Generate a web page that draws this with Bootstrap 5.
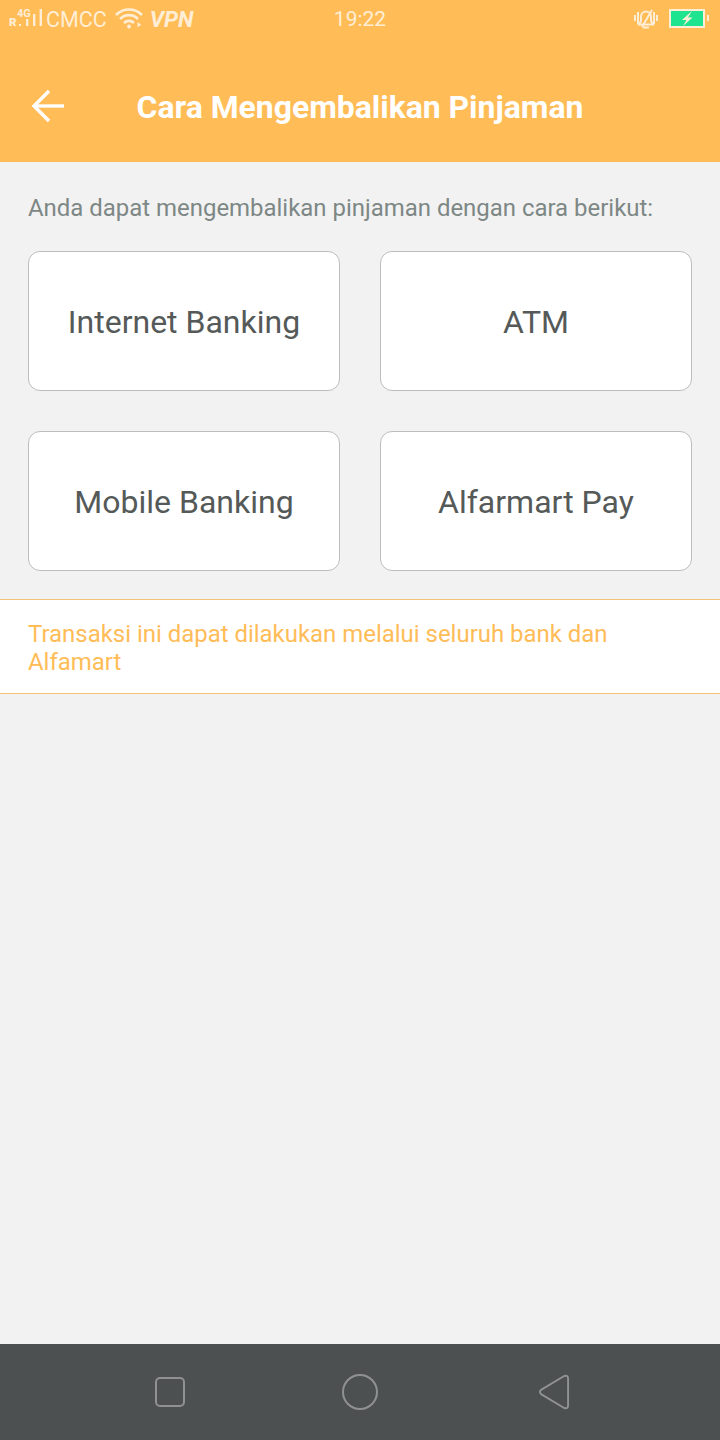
<!DOCTYPE html>
<html lang="en">
<head>
  <meta charset="UTF-8">
  <meta name="viewport" content="width=device-width, initial-scale=1.0">
  <title>Cara Mengembalikan Pinjaman</title>
  <link href="https://cdn.jsdelivr.net/npm/bootstrap@5.3.0/dist/css/bootstrap.min.css" rel="stylesheet">
  <style>
    html, body {
      height: 1440px;
      overflow: hidden;
    }

    body {
      font-family: Roboto, "Liberation Sans", sans-serif;
      background-color: #f2f2f2;
    }

    .app-top {
      height: 162px;
      background-color: #ffbc57;
    }

    .status-row {
      height: 40px;
      padding: 0 11px 0 9px;
      color: #ffeed6;
      font-size: 21.5px;
    }

    .status-left {
      width: 242px;
    }

    .status-time {
      font-size: 21px;
    }

    .status-right {
      width: 240px;
    }

    .vpn-label {
      margin-left: 7px;
      font-weight: 700;
      font-style: italic;
      font-size: 22.5px;
    }

    .batt-icon {
      margin-left: 11px;
    }

    .title-row {
      height: 122px;
      padding-top: 14px;
    }

    .back-btn {
      left: 31px;
      top: 89px;
      line-height: 0;
    }

    .page-title {
      font-size: 31.9px;
      font-weight: 700;
      color: #fff;
    }

    .intro-text {
      padding: 32px 28px 0;
      height: 89px;
      font-size: 23.95px;
      line-height: 28px;
      color: #7d8785;
    }

    .method-grid {
      display: grid;
      grid-template-columns: 312px 312px;
      column-gap: 40px;
      row-gap: 40px;
      padding: 0 28px;
    }

    .method-btn {
      height: 140px;
      padding-top: 2px;
      font-size: 32px;
      color: #555a59;
      background-color: #fff;
      border: 1px solid #bdbdbd;
      border-radius: 12px;
    }

    .note-box {
      margin-top: 28px;
      padding: 20px 28px 17px;
      font-size: 23.95px;
      line-height: 28px;
      color: #ffbc57;
      background-color: #fff;
      border-top: 1px solid #f5c27a;
      border-bottom: 1px solid #f5c27a;
    }

    .nav-bottom {
      height: 96px;
      background-color: #4c5050;
    }

    .nav-slot {
      width: 190px;
      line-height: 0;
    }
  </style>
</head>
<body class="d-flex flex-column">

<div class="app-top position-relative">
  <div class="status-row d-flex align-items-center justify-content-between">
    <div class="status-left d-flex align-items-center">
      <svg width="33" height="40" viewBox="0 0 33 40" fill="#ffeed6">
        <text x="8" y="16.5" font-size="11" font-family="Roboto" font-weight="700">4G</text>
        <text x="0" y="26" font-size="11.5" font-family="Roboto" font-weight="900">R</text>
        <rect x="10" y="24" width="2" height="2"/>
        <rect x="17" y="19" width="2.4" height="7"/>
        <rect x="24" y="14" width="2.4" height="12"/>
        <rect x="30.6" y="9" width="2.4" height="17"/>
      </svg>
      <span class="ms-1">CMCC</span>
      <svg class="ms-2" width="28" height="40" viewBox="0 0 28 40" fill="none" stroke="#ffeed6" stroke-width="2.6">
        <path d="M1 15 A18 18 0 0 1 27 15"/>
        <path d="M5 19 A12.5 12.5 0 0 1 23 19"/>
        <path d="M9 23 A7 7 0 0 1 19 23"/>
        <circle cx="14" cy="26.5" r="2" fill="#ffeed6" stroke="none"/>
        <path d="M22 21 L27 25 L22 28 Z" fill="#ffeed6" stroke="#ffbc57" stroke-width="1"/>
      </svg>
      <span class="vpn-label">VPN</span>
    </div>
    <div class="status-time">19:22</div>
    <div class="status-right d-flex align-items-center justify-content-end">
      <svg width="24" height="40" viewBox="0 -9 24 40" fill="none" stroke="#ffeed6" stroke-width="2">
        <path d="M5 15.5 L7 12 V7.5 A5 5 0 0 1 17 7.5 V12 L19 15.5 Z"/>
        <path d="M9 18.5 H15"/>
        <path d="M18 1 L8 18"/>
        <path d="M1 6 V12 M4 3 V15 M20 3 V15 M23 6 V12"/>
      </svg>
      <svg class="batt-icon" width="40" height="40" viewBox="0 0 40 40">
        <rect x="1" y="10" width="34" height="17" fill="#1ee48f" stroke="#ffeed6" stroke-width="2"/>
        <rect x="38" y="15" width="2" height="6" fill="#ffeed6"/>
        <path d="M23 11 L13 20 H17.5 L14 26 L23.5 17.5 H19 Z" fill="#ffeed6"/>
      </svg>
    </div>
  </div>
  <div class="title-row d-flex align-items-center justify-content-center">
    <span class="back-btn position-absolute">
      <svg width="34" height="34" viewBox="0 0 34 34" fill="none" stroke="#fff" stroke-width="3.4">
        <path d="M33 17 H3"/>
        <path d="M18 2 L3 17 L18 32"/>
      </svg>
    </span>
    <div class="page-title">Cara Mengembalikan Pinjaman</div>
  </div>
</div>

<div class="intro-text">Anda dapat mengembalikan pinjaman dengan cara berikut:</div>

<div class="method-grid">
  <div class="method-btn d-flex align-items-center justify-content-center">Internet Banking</div>
  <div class="method-btn d-flex align-items-center justify-content-center">ATM</div>
  <div class="method-btn d-flex align-items-center justify-content-center">Mobile Banking</div>
  <div class="method-btn d-flex align-items-center justify-content-center">Alfarmart Pay</div>
</div>

<div class="note-box">Transaksi ini dapat dilakukan melalui seluruh bank dan Alfamart</div>

<div class="flex-grow-1"></div>

<div class="nav-bottom d-flex align-items-center justify-content-center">
  <div class="nav-slot d-flex justify-content-center">
    <svg width="30" height="30" viewBox="0 0 30 30" fill="none" stroke="#8f9291" stroke-width="2">
      <rect x="1" y="1" width="28" height="28" rx="4"/>
    </svg>
  </div>
  <div class="nav-slot d-flex justify-content-center">
    <svg width="36" height="36" viewBox="0 0 36 36" fill="none" stroke="#8f9291" stroke-width="2">
      <circle cx="18" cy="18" r="17"/>
    </svg>
  </div>
  <div class="nav-slot d-flex justify-content-center">
    <svg class="ms-2" width="31" height="36" viewBox="0 0 32 36" fill="none" stroke="#8f9291" stroke-width="2" stroke-linejoin="round">
      <path d="M2.5 15.5 L26 1.5 Q30 0.5 30 4 V32 Q30 35.5 26 34.5 L2.5 20.5 Q-0.5 18 2.5 15.5 Z"/>
    </svg>
  </div>
</div>

</body>
</html>
